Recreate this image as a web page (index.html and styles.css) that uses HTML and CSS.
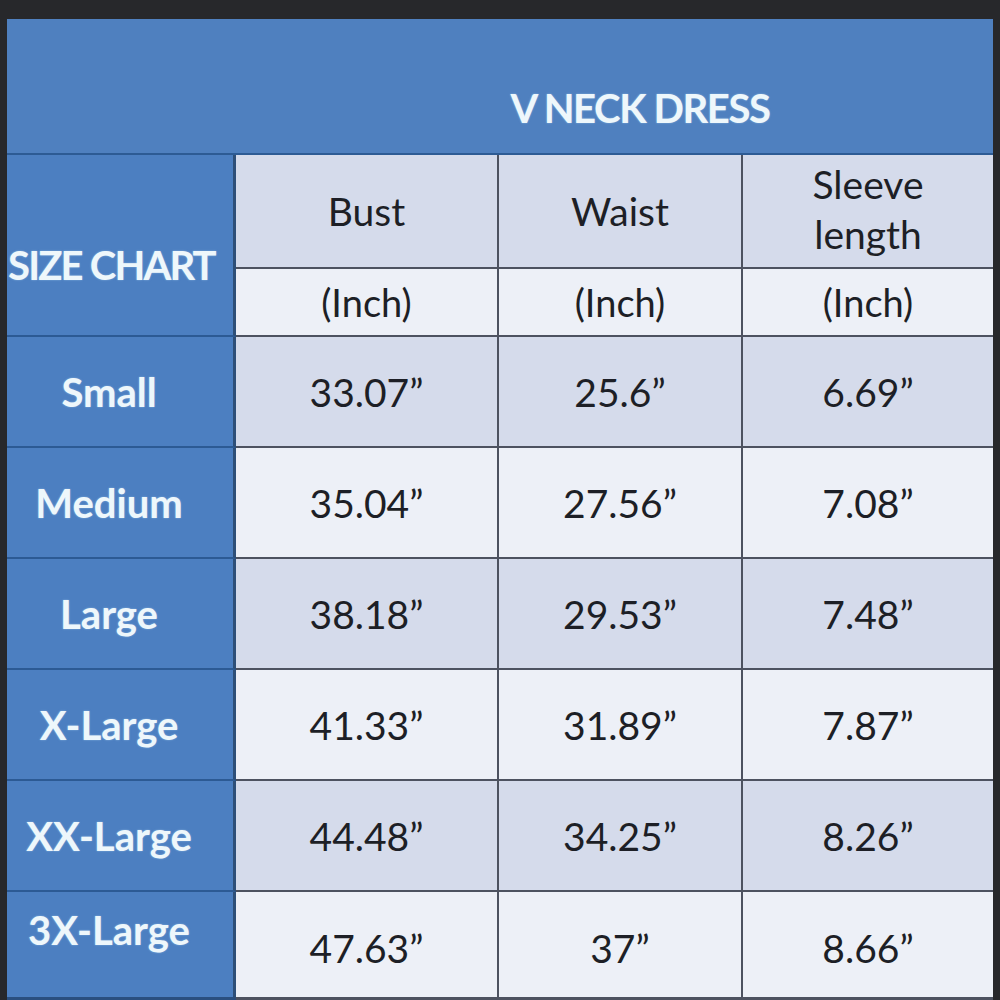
FILE: index.html
```html
<!DOCTYPE html>
<html lang="en">
<head>
<meta charset="utf-8">
<title>V Neck Dress Size Chart</title>
<link rel="stylesheet" href="styles.css">
</head>
<body>
<div class="frame">
  <div class="sheet">
    <div class="title"><span>V NECK DRESS</span></div>
    <div class="grid">
      <div class="cell side corner">SIZE CHART</div>
      <div class="cell data tint head">Bust</div>
      <div class="cell data tint head">Waist</div>
      <div class="cell data tint head last-col two-line">Sleeve<br>length</div>
      <div class="cell data light unit">(Inch)</div>
      <div class="cell data light unit">(Inch)</div>
      <div class="cell data light unit last-col">(Inch)</div>

      <div class="cell side">Small</div>
      <div class="cell data tint">33.07”</div>
      <div class="cell data tint">25.6”</div>
      <div class="cell data tint last-col">6.69”</div>

      <div class="cell side">Medium</div>
      <div class="cell data light">35.04”</div>
      <div class="cell data light">27.56”</div>
      <div class="cell data light last-col">7.08”</div>

      <div class="cell side">Large</div>
      <div class="cell data tint">38.18”</div>
      <div class="cell data tint">29.53”</div>
      <div class="cell data tint last-col">7.48”</div>

      <div class="cell side">X-Large</div>
      <div class="cell data light">41.33”</div>
      <div class="cell data light">31.89”</div>
      <div class="cell data light last-col">7.87”</div>

      <div class="cell side">XX-Large</div>
      <div class="cell data tint">44.48”</div>
      <div class="cell data tint">34.25”</div>
      <div class="cell data tint last-col">8.26”</div>

      <div class="cell side final-side">3X-Large</div>
      <div class="cell data light final">47.63”</div>
      <div class="cell data light final">37”</div>
      <div class="cell data light final last-col">8.66”</div>
    </div>
  </div>
</div>
</body>
</html>
```

FILE: styles.css
```css
* { box-sizing: border-box; }

html, body {
  margin: 0;
  padding: 0;
  width: 1000px;
  height: 1000px;
  overflow: hidden;
  background: #27282b;
}

.frame {
  padding: 19px 7px 0 7px;
  height: 1000px;
}

.sheet {
  width: 986px;
  font-family: Lato, "Open Sans", "Liberation Sans", sans-serif;
}

.title {
  height: 136px;
  background: #4f80bf;
  border-bottom: 2px solid #2d5b94;
  display: flex;
  justify-content: center;
  padding-left: 280px;
  padding-top: 69px;
  align-items: flex-start;
}

.title span {
  font-weight: 700;
  font-size: 40px;
  line-height: 40px;
  letter-spacing: -1.4px;
  color: #eef7fb;
  text-shadow: 0 0 2px rgba(200, 235, 255, 0.5);
}

.grid {
  display: grid;
  grid-template-columns: 229px 263px 244px 250px;
  grid-template-rows: 114px 68px repeat(5, 111px) 108px;
}

.cell {
  display: flex;
  align-items: center;
  justify-content: center;
  text-align: center;
}

.side {
  background: #4c7fc1;
  border-right: 3px solid #2e4f78;
  border-bottom: 2px solid #2c5a94;
  color: #eef7fb;
  font-weight: 700;
  font-size: 40px;
  padding-right: 22px;
  text-shadow: 0 0 2px rgba(200, 235, 255, 0.5);
}

.corner {
  grid-row: span 2;
  justify-content: flex-start;
  padding-left: 1px;
  padding-right: 0;
  padding-top: 40px;
  letter-spacing: -1.8px;
  white-space: nowrap;
}

.final-side {
  padding-bottom: 30px;
  border-bottom: 3px solid #2a4f80;
}

.data {
  border-right: 2px solid #4d5260;
  border-bottom: 2px solid #4d5260;
  color: #1d1f26;
  font-size: 39px;
}

.data.last-col {
  border-right: none;
}

.tint { background: #d5dbeb; }
.light { background: #edf0f7; }

.head {
  font-size: 39px;
}

.two-line {
  line-height: 50px;
  padding-bottom: 4px;
}

.unit {
  font-size: 38px;
}

.final {
  padding-top: 6px;
  border-bottom: 3px solid #4d5260;
}
```
